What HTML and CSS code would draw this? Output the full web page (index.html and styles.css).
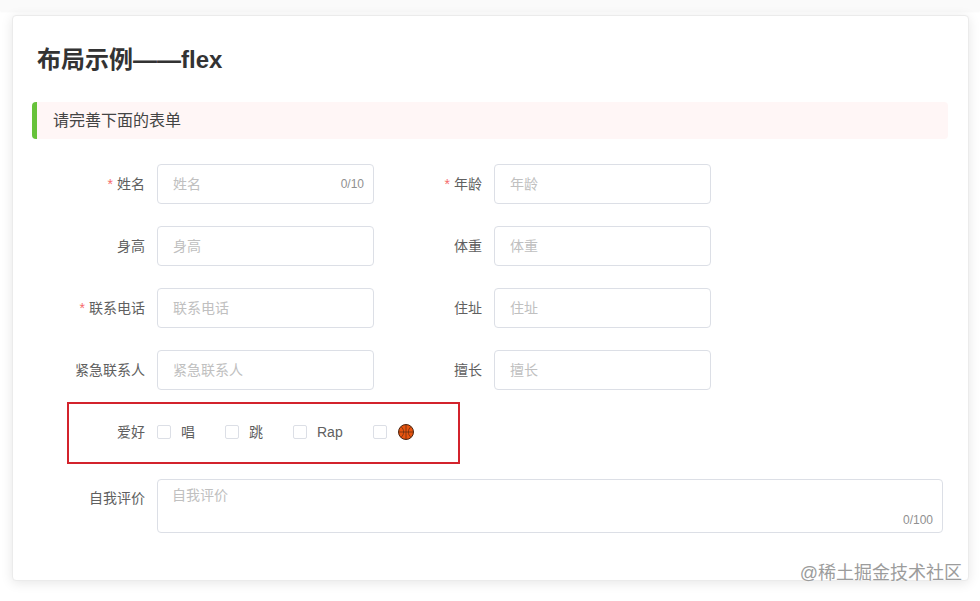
FILE: index.html
```html
<!DOCTYPE html>
<html lang="zh-CN">
<head>
<meta charset="utf-8">
<title>布局示例——flex</title>
<link rel="stylesheet" href="styles.css">
</head>
<body>
<div class="top-strip"></div>
<main class="card">
  <h2 class="title">布局示例——flex</h2>
  <div class="alert">请完善下面的表单</div>
  <form class="form">
    <div class="row">
      <div class="field">
        <label class="label"><span class="req">*</span>姓名</label>
        <div class="input"><span class="ph">姓名</span><span class="count">0/10</span></div>
      </div>
      <div class="field">
        <label class="label"><span class="req">*</span>年龄</label>
        <div class="input"><span class="ph">年龄</span></div>
      </div>
    </div>
    <div class="row">
      <div class="field">
        <label class="label">身高</label>
        <div class="input"><span class="ph">身高</span></div>
      </div>
      <div class="field">
        <label class="label">体重</label>
        <div class="input"><span class="ph">体重</span></div>
      </div>
    </div>
    <div class="row">
      <div class="field">
        <label class="label"><span class="req">*</span>联系电话</label>
        <div class="input"><span class="ph">联系电话</span></div>
      </div>
      <div class="field">
        <label class="label">住址</label>
        <div class="input"><span class="ph">住址</span></div>
      </div>
    </div>
    <div class="row">
      <div class="field">
        <label class="label">紧急联系人</label>
        <div class="input"><span class="ph">紧急联系人</span></div>
      </div>
      <div class="field">
        <label class="label">擅长</label>
        <div class="input"><span class="ph">擅长</span></div>
      </div>
    </div>
    <div class="row hobby-row">
      <div class="annotation"></div>
      <label class="label">爱好</label>
      <div class="checks">
        <span class="check c1"><i class="box"></i><span class="cjk">唱</span></span>
        <span class="check c2"><i class="box"></i><span class="cjk">跳</span></span>
        <span class="check c3"><i class="box"></i>Rap</span>
        <span class="check"><i class="box"></i>
          <svg class="ball" viewBox="0 0 16 16" width="16" height="16" aria-hidden="true">
            <circle cx="8" cy="8" r="7.5" fill="#e8540f" stroke="#4a2410" stroke-width="1"/>
            <path d="M8 .5v15M.5 8h15M3 2.6C5 4.5 5.6 6 5.6 8S5 11.500 3 13.400M13 2.600C11 4.500 10.400 6 10.400 8s.6 3.500 2.600 5.400" fill="none" stroke="#6a3010" stroke-width=".8"/>
          </svg>
        </span>
      </div>
    </div>
    <div class="row area-row">
      <label class="label">自我评价</label>
      <div class="textarea"><span class="ph">自我评价</span><span class="count area-count">0/100</span></div>
    </div>
  </form>
  <div class="watermark">@稀土掘金技术社区</div>
</main>
</body>
</html>
```
FILE: styles.css
```css
* { box-sizing: border-box; }
html, body { margin: 0; padding: 0; }
body {
  width: 980px;
  height: 601px;
  overflow: hidden;
  background: #fff;
  font-family: "Liberation Sans", "Noto Sans CJK SC", sans-serif;
  font-size: 14px;
  color: #606060;
}
.top-strip {
  height: 11px;
  background: #fafafa;
  box-shadow: 0 1px 2px rgba(0,0,0,.03);
}
.card {
  position: relative;
  width: 957px;
  height: 566px;
  margin: 4px 0 0 12px;
  padding: 28px 20px 0 19px;
  background: #fff;
  border: 1px solid #ebebeb;
  border-radius: 4px;
  box-shadow: 0 2px 12px rgba(0,0,0,.1);
}
.title {
  margin: 0 0 0 5px;
  font-size: 24px;
  line-height: 31px;
  font-weight: 700;
  color: #333;
}
.alert {
  height: 37px;
  margin-top: 27px;
  width: 916px;
  padding-left: 16px;
  line-height: 38px;
  font-size: 16px;
  color: #444;
  background: #fff6f6;
  border-left: 5px solid #67c23a;
  border-radius: 4px;
}
.form { margin-top: 25px; padding-left: 13px; }
.row { display: flex; gap: 8px; height: 40px; margin-bottom: 22px; }
.field { display: flex; width: 329px; }
.label {
  flex: none;
  width: 100px;
  margin-right: 12px;
  text-align: right;
  line-height: 40px;
  font-size: 14px;
  color: #606060;
}
.req { color: #f56c6c; margin-right: 4px; }
.input {
  display: flex;
  align-items: center;
  justify-content: space-between;
  width: 217px;
  height: 40px;
  padding: 0 9px 0 15px;
  border: 1px solid #dcdfe6;
  border-radius: 4px;
  background: #fff;
}
.ph { color: #c0c0c0; font-size: 14px; }
.input .ph { margin-bottom: 2px; }
.count { color: #909090; font-size: 12px; }
.hobby-row { position: relative; gap: 0; margin-bottom: 27px; }
.annotation {
  position: absolute;
  left: 22px;
  top: -10px;
  width: 393px;
  height: 62px;
  border: 2px solid #d3232c;
  pointer-events: none;
}
.checks { display: flex; align-items: center; }
.check { display: flex; align-items: center; margin-right: 30px; font-size: 14px; color: #606060; }
.check.c1, .check.c2 { width: 38px; }
.cjk { margin-bottom: 2px; }
.box {
  flex: none;
  width: 14px;
  height: 14px;
  margin-right: 10px;
  border: 1px solid #dcdfe6;
  border-radius: 2px;
  background: #fff;
}
.ball { display: block; margin-left: 1px; }
.area-row { height: 54px; gap: 0; }
.area-row .label { line-height: 38px; }
.textarea {
  position: relative;
  width: 786px;
  height: 54px;
  padding: 5px 14px;
  border: 1px solid #dcdfe6;
  border-radius: 4px;
  line-height: 21px;
}
.area-count { position: absolute; right: 9px; bottom: 4px; line-height: 16px; }
.watermark {
  position: absolute;
  right: 6px;
  bottom: -5px;
  font-size: 18px;
  line-height: 24px;
  color: #9c9c9c;
  text-shadow: 0 0 2px #fff;
}
```
